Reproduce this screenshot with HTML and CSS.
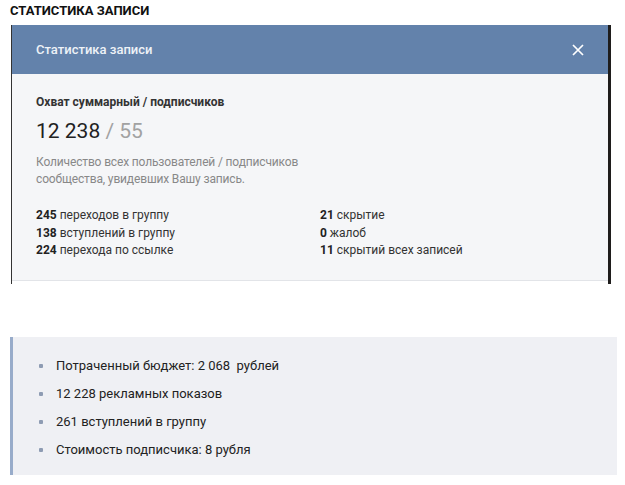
FILE: index.html
```html
<!DOCTYPE html>
<html lang="ru">
<head>
  <meta charset="UTF-8" />
  <meta name="viewport" content="width=device-width, initial-scale=1.0" />
  <title>Статистика записи</title>
  <link rel="stylesheet" href="styles.css">
</head>
<body>

  <h2 class="section-title">Статистика записи</h2>

  <div class="shot">
    <div class="modal">
      <div class="modal-head">
        <span>Статистика записи</span>
        <svg class="close" width="12" height="12" viewBox="0 0 12 12">
          <path d="M1 1 L11 11 M11 1 L1 11" stroke="#fff" stroke-width="1.7" fill="none" />
        </svg>
      </div>
      <div class="modal-body">
        <div class="reach-label">Охват суммарный / подписчиков</div>
        <div class="reach-value">12 238 <span class="muted">/ 55</span></div>
        <p class="reach-note">Количество всех пользователей / подписчиков<br>сообщества, увидевших Вашу запись.</p>

        <div class="stats">
          <div><b>245</b> переходов в группу</div>
          <div><b>21</b> скрытие</div>
          <div><b>138</b> вступлений в группу</div>
          <div><b>0</b> жалоб</div>
          <div><b>224</b> перехода по ссылке</div>
          <div><b>11</b> скрытий всех записей</div>
        </div>
      </div>
    </div>
  </div>

  <ul class="summary">
    <li>Потраченный бюджет: 2 068&nbsp; рублей</li>
    <li>12 228 рекламных показов</li>
    <li>261 вступлений в группу</li>
    <li>Стоимость подписчика: 8 рубля</li>
  </ul>

</body>
</html>
```

FILE: styles.css
```css
body {
  margin: 0;
  padding: 3px 8px 0 10px;
  font-family: Roboto, "Noto Sans", sans-serif;
  background-color: #fff;
  color: #222;
}

.section-title {
  margin: 0;
  font-size: 13px;
  line-height: 16px;
  font-weight: 700;
  text-transform: uppercase;
  color: #111;
}

.shot {
  margin: 6px 0 0 1px;
  width: 596px;
  border-left: 1px solid #333;
  border-right: 3px solid #1f1d1c;
  padding-bottom: 3px;
}

.modal-head {
  height: 49px;
  background-color: #6382ab;
  display: flex;
  align-items: center;
  justify-content: space-between;
  padding: 0 24px;
  color: #eef2f7;
  font-size: 13px;
  font-weight: 500;
}

.modal-body {
  background-color: #f5f6f8;
  border-bottom: 1px solid #e2e4e8;
  padding: 20px 24px;
}

.reach-label {
  font-size: 12px;
  line-height: 16px;
  font-weight: 700;
  color: #333;
}

.reach-value {
  margin-top: 8px;
  font-size: 21px;
  line-height: 26px;
  color: #222;
}

.muted {
  color: #a2a2a2;
}

.reach-note {
  margin: 10px 0 0;
  font-size: 12px;
  line-height: 17px;
  letter-spacing: -0.15px;
  color: #888;
}

.stats {
  margin-top: 19px;
  display: grid;
  grid-template-columns: 284px 1fr;
  font-size: 12px;
  line-height: 17.5px;
  color: #333;
}

.stats b {
  color: #222;
}

.summary {
  margin: 53px 0 0 0;
  padding: 15px 0 11px 43px;
  list-style: none;
  width: 561px;
  background-color: #eff0f4;
  border-left: 3px solid #98acca;
}

.summary li {
  position: relative;
  font-size: 13px;
  line-height: 28px;
  color: #222;
}

.summary li::before {
  content: "";
  position: absolute;
  left: -17px;
  top: 12px;
  width: 4px;
  height: 4px;
  border-radius: 1px;
  background-color: #8e9cb3;
}
```
